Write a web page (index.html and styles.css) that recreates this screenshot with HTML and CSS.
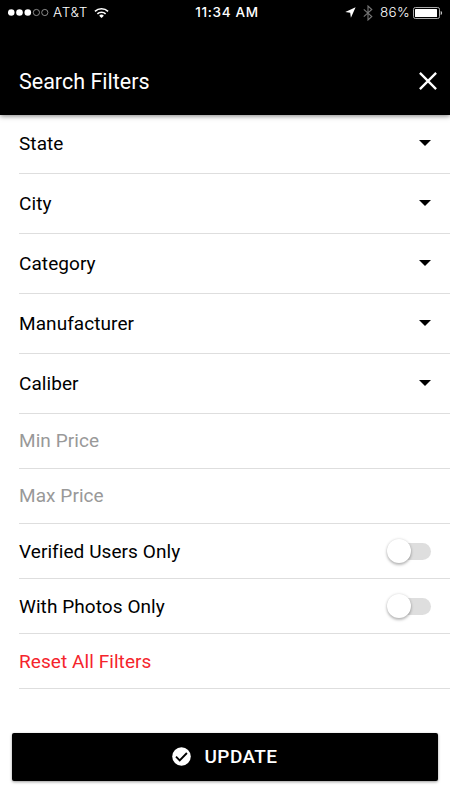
FILE: index.html
```html
<!DOCTYPE html>
<html lang="en">
  <head>
    <meta charset="UTF-8" />
    <meta name="viewport" content="width=device-width, initial-scale=1.0" />
    <title>Search Filters</title>
    <link rel="stylesheet" href="styles.css">
  </head>
  <body>
    <header class="header">
      <div class="status-bar">
        <div class="status-left">
          <svg class="signal" width="41" height="9" viewBox="0 0 41 9">
            <circle cx="3.2" cy="4.5" r="3.3" fill="#fff" />
            <circle cx="11.5" cy="4.5" r="3.3" fill="#fff" />
            <circle cx="19.8" cy="4.5" r="3.3" fill="#fff" />
            <circle cx="28.4" cy="4.5" r="3.1" fill="none" stroke="#aaa" stroke-width="0.8" />
            <circle cx="36.8" cy="4.5" r="3.1" fill="none" stroke="#aaa" stroke-width="0.8" />
          </svg>
          <span class="carrier">AT&amp;T</span>
          <svg class="wifi" width="15" height="12" viewBox="0 0 16 12">
            <g fill="none" stroke="#fff" stroke-width="1.7">
              <path d="M1 4.3a10 10 0 0 1 14 0" />
              <path d="M3.6 7a6.3 6.3 0 0 1 8.8 0" />
            </g>
            <path d="M5.5 8.9a3.6 3.6 0 0 1 5 0L8 11.4z" fill="#fff" />
          </svg>
        </div>
        <span class="time">11:34 AM</span>
        <div class="status-right">
          <svg class="location" width="11" height="11" viewBox="0 0 11 11">
            <path d="M10.6 0.3L0.3 5l4.9 0.7 0.7 5z" fill="#fff" />
          </svg>
          <svg class="bluetooth" width="10" height="16" viewBox="0 0 10 16">
            <path d="M0.8 4.3l8 7.2L5 15V1l3.8 3.5-8 7.2" fill="none" stroke="#777" stroke-width="1.1" />
          </svg>
          <span class="battery-level">86%</span>
          <svg class="battery" width="30" height="12" viewBox="0 0 30 12">
            <rect x="0.5" y="0.5" width="26" height="11" rx="1.8" fill="none" stroke="#aaa" />
            <rect x="2" y="2" width="22" height="8" rx="0.5" fill="#fff" />
            <path d="M27.7 4c1.8 0.5 1.8 3.5 0 4z" fill="#ccc" />
          </svg>
        </div>
      </div>
      <div class="toolbar">
        <h1 class="title">Search Filters</h1>
        <svg class="close" width="18" height="18" viewBox="0 0 18 18">
          <path d="M0.9 0.9l16.2 16.2M17.1 0.9L0.9 17.1" stroke="#fff" stroke-width="2.3" />
        </svg>
      </div>
    </header>

    <main class="filters">
      <div class="row select"><span>State</span><i class="arrow"></i></div>
      <div class="row select"><span>City</span><i class="arrow"></i></div>
      <div class="row select"><span>Category</span><i class="arrow"></i></div>
      <div class="row select"><span>Manufacturer</span><i class="arrow"></i></div>
      <div class="row select"><span>Caliber</span><i class="arrow"></i></div>
      <div class="row placeholder"><span>Min Price</span></div>
      <div class="row placeholder"><span>Max Price</span></div>
      <div class="row"><span>Verified Users Only</span><div class="toggle"><div class="knob"></div></div></div>
      <div class="row"><span>With Photos Only</span><div class="toggle"><div class="knob"></div></div></div>
      <div class="row reset"><span>Reset All Filters</span></div>
    </main>

    <footer class="footer">
      <button class="update">
        <svg width="19" height="19" viewBox="0 0 19 19">
          <circle cx="9.5" cy="9.5" r="9.3" fill="#fff" />
          <path d="M4 9.7l3.7 3.7 7.2-7.4" fill="none" stroke="#000" stroke-width="1.9" />
        </svg>
        <span>UPDATE</span>
      </button>
    </footer>
  </body>
</html>
```

FILE: styles.css
```css
* {
  box-sizing: border-box;
}

body {
  margin: 0;
  height: 800px;
  overflow: hidden;
  font-family: Roboto, sans-serif;
  background-color: #fff;
  color: #000;
}

.header {
  height: 115px;
  background-color: #000;
  color: #fff;
  box-shadow: 0 1px 5px rgba(0, 0, 0, 0.5);
}

.status-bar {
  display: grid;
  grid-template-columns: 1fr auto 1fr;
  align-items: center;
  height: 25px;
  padding: 0 7px 0 8px;
  font-family: Inter, sans-serif;
  font-size: 13.5px;
  line-height: 25px;
}

.status-left,
.status-right {
  display: flex;
  align-items: center;
}

.status-right {
  justify-content: flex-end;
}

.carrier {
  margin: 0 6px 0 4px;
  font-weight: 300;
  letter-spacing: 0.7px;
}

.time {
  padding-left: 3px;
  font-weight: 500;
  letter-spacing: 0.7px;
}

.bluetooth {
  margin: 0 7px 0 7px;
}

.battery-level {
  margin-right: 3px;
  font-weight: 300;
  letter-spacing: 0.3px;
}

.toolbar {
  display: flex;
  align-items: center;
  justify-content: space-between;
  height: 90px;
  padding: 22px 13px 0 19px;
}

.title {
  margin: 0;
  font-size: 21.5px;
  font-weight: 400;
}

.filters {
  padding-left: 19px;
}

.row {
  display: flex;
  align-items: center;
  justify-content: space-between;
  height: 55px;
  padding-right: 19px;
  border-bottom: 1px solid #dedede;
  font-size: 19px;
  letter-spacing: 0.07px;
}

.select {
  height: 60px;
}

.select:first-child {
  height: 59px;
  padding-bottom: 1px;
}

.arrow {
  margin: 0 0 2px;
  border: 6px solid transparent;
  border-top-color: #000;
  border-bottom: 0;
}

.placeholder {
  padding-bottom: 2px;
  color: #999;
}

.reset {
  color: #f5242c;
}

.toggle {
  display: flex;
  align-items: center;
  width: 44px;
  height: 17px;
  border-radius: 9px;
  background: linear-gradient(to right, transparent 12px, #dedede 12px);
}

.knob {
  width: 24px;
  height: 24px;
  border-radius: 50%;
  background-color: #fff;
  box-shadow: 0 2px 3px rgba(0, 0, 0, 0.25), 0 0 3px rgba(0, 0, 0, 0.15);
}

.footer {
  padding: 44px 12px 0;
}

.update {
  display: flex;
  align-items: center;
  justify-content: center;
  gap: 14px;
  width: 100%;
  height: 48px;
  padding: 0 1px 2px 0;
  border: 0;
  border-radius: 2px;
  background-color: #000;
  box-shadow: 0 1px 3px rgba(0, 0, 0, 0.4);
  color: #fff;
  font-family: Roboto, sans-serif;
  font-size: 19px;
  font-weight: 500;
  letter-spacing: 0.4px;
}
```
